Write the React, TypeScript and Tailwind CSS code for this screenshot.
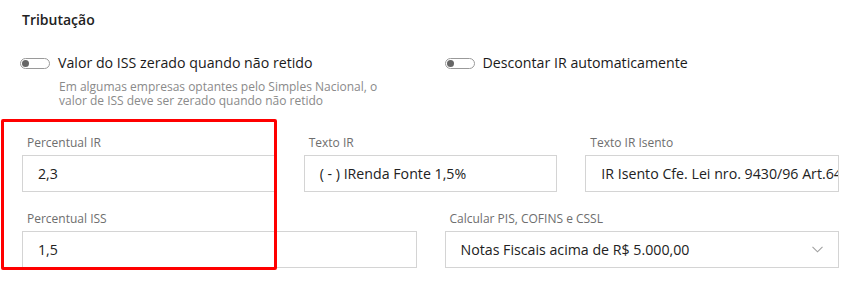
import React from "react";

function Toggle() {
  return (
    <div className="relative w-[30px] h-[11px] rounded-full border border-[#9a9a9a] bg-white shrink-0">
      <div className="absolute left-[1px] top-[1px] w-[7px] h-[7px] rounded-full bg-[#666]" />
    </div>
  );
}

function Field({ label, value, select }: { label: string; value: string; select?: boolean }) {
  return (
    <div className="flex flex-col">
      <div className="pl-[5px] text-[12px] leading-[16px] text-[#6e6e6e] mb-[4px]">{label}</div>
      <div className="relative h-[37px] border border-[#d4d4d4] bg-white pl-[15px] pr-[15px] flex items-center overflow-hidden whitespace-nowrap text-[14.2px] text-[#222]">
        <span>{value}</span>
        {select && (
          <svg className="absolute right-[15px] top-[14px]" width="11" height="7" viewBox="0 0 11 7">
            <polyline points="0.5,0.8 5.5,5.8 10.5,0.8" fill="none" stroke="#a0a0a0" strokeWidth="1.1" />
          </svg>
        )}
      </div>
    </div>
  );
}

export default function App() {
  return (
    <div className="relative w-[851px] h-[290px] bg-white overflow-hidden font-['Open_Sans',sans-serif]">
      <div className="pt-[10px] pl-[22px] pr-[12px]">
        <div className="h-[20px] leading-[20px] text-[14px] font-semibold text-[#222]">Tributação</div>
        <div className="grid grid-cols-2 gap-x-[28px] mt-[23px]">
          <div>
            <div className="flex items-center h-[20px] -ml-[2px] gap-[8px]">
              <Toggle />
              <span className="text-[14.2px] text-[#1a1a1a]">Valor do ISS zerado quando não retido</span>
            </div>
            <div className="mt-[7px] pl-[37px] text-[12px] leading-[14px] text-[#8a8a8a]">
              <div>Em algumas empresas optantes pelo Simples Nacional, o</div>
              <div>valor de ISS deve ser zerado quando não retido</div>
            </div>
          </div>
          <div>
            <div className="flex items-center h-[20px] gap-[8px]">
              <Toggle />
              <span className="text-[14.2px] text-[#1a1a1a]">Descontar IR automaticamente</span>
            </div>
          </div>
        </div>
        <div className="grid grid-cols-3 gap-x-[28px] mt-[27px]">
          <Field label="Percentual IR" value="2,3" />
          <Field label="Texto IR" value="( - ) IRenda Fonte 1,5%" />
          <Field label="Texto IR Isento" value="IR Isento Cfe. Lei nro. 9430/96 Art.64" />
        </div>
        <div className="grid grid-cols-2 gap-x-[28px] mt-[19px]">
          <Field label="Percentual ISS" value="1,5" />
          <Field label="Calcular PIS, COFINS e CSSL" value="Notas Fiscais acima de R$ 5.000,00" select />
        </div>
      </div>
      <div className="absolute left-[1px] top-[119px] w-[276px] h-[151px] border-[3px] border-[#f00] rounded-[2px] pointer-events-none" />
    </div>
  );
}
